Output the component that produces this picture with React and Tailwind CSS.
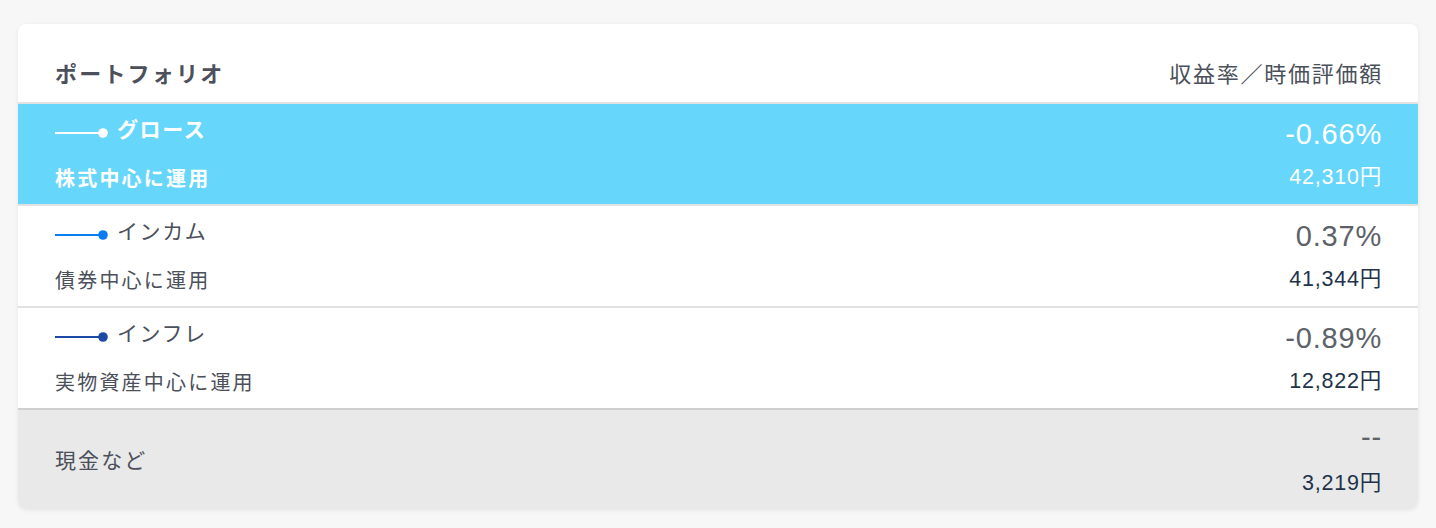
import React from 'react'

const funds = [
  { name: 'グロース', desc: '株式中心に運用', rate: '-0.66%', amount: '42,310円', line: '#ffffff', active: true },
  { name: 'インカム', desc: '債券中心に運用', rate: '0.37%', amount: '41,344円', line: '#0a7cf3' },
  { name: 'インフレ', desc: '実物資産中心に運用', rate: '-0.89%', amount: '12,822円', line: '#1c48a6' },
]

const jp = "font-['Hiragino_Sans','Noto_Sans_CJK_JP',sans-serif]"
const num = "font-['Helvetica_Neue','Liberation_Sans','Noto_Sans_CJK_JP',sans-serif]"

const LineMark = ({ color }) => (
  <svg width="54" height="12" viewBox="0 0 54 12" className="mt-[8px] shrink-0">
    <line x1="0" y1="6" x2="45" y2="6" stroke={color} strokeWidth="2" />
    <circle cx="48" cy="6" r="4.8" fill={color} />
  </svg>
)

const FundRow = ({ fund }) => {
  const text = fund.active ? 'text-white' : 'text-[#4b505a]'
  return (
    <div className={`flex h-[102px] justify-between border-t-2 border-t-[#e2e2e2] pl-[37px] pr-[36px] ${fund.active ? 'bg-[#66d6fb]' : 'bg-white'}`}>
      <div className={`flex flex-col ${jp} ${text} tracking-[0.1em]`}>
        <div className="flex h-[50px] items-center gap-[8px]">
          <LineMark color={fund.line} />
          <span className={`text-[21px] ${fund.active ? 'font-bold' : ''}`}>{fund.name}</span>
        </div>
        <div className={`flex h-[48px] items-center text-[20px] tracking-[0.11em] ${fund.active ? 'font-bold' : ''}`}>{fund.desc}</div>
      </div>
      <div className={`flex flex-col items-end ${num} tracking-[0.05em]`}>
        <div className={`flex h-[58px] items-center pt-[4px] text-[29px] ${fund.active ? 'text-white' : 'text-[#5d6168]'}`}>{fund.rate}</div>
        <div className={`flex h-[30px] items-center text-[21.5px] ${fund.active ? 'text-white' : 'text-[#22324a]'}`}>{fund.amount}</div>
      </div>
    </div>
  )
}

export default function App() {
  return (
    <div className="min-h-[528px] bg-[#f7f7f7] px-[18px] pt-[24px]">
      <div className="overflow-hidden rounded-[8px] bg-white shadow-[0_1px_4px_rgba(0,0,0,0.08)]">
        <div className={`flex h-[78px] items-center justify-between pl-[37px] pr-[35px] pt-[18px] ${jp} text-[#4b505a]`}>
          <span className="text-[22px] font-bold tracking-[0.1em]">ポートフォリオ</span>
          <span className="text-[22px] tracking-[0.08em]">収益率／時価評価額</span>
        </div>
        {funds.map(fund => (
          <FundRow key={fund.name} fund={fund} />
        ))}
        <div className="flex h-[101px] justify-between border-t-2 border-t-[#cfcfcf] bg-[#e9e9e9] pl-[37px] pr-[36px]">
          <div className={`flex items-center ${jp} text-[21px] tracking-[0.1em] text-[#4b505a]`}>現金など</div>
          <div className={`flex flex-col items-end ${num} tracking-[0.05em]`}>
            <div className="flex h-[56px] items-center text-[29px] text-[#5d6168]">--</div>
            <div className="flex h-[34px] items-center text-[21.5px] text-[#22324a]">3,219円</div>
          </div>
        </div>
      </div>
    </div>
  )
}
